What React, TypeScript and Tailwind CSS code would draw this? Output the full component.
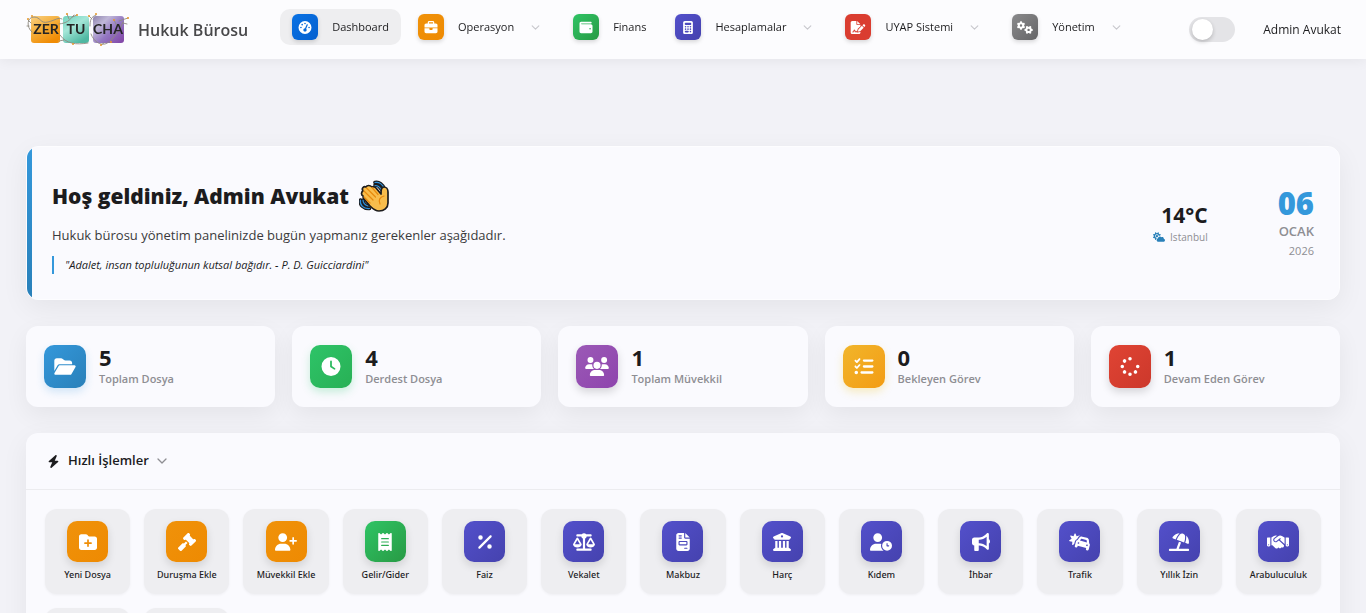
import React from "react";
import type { IconType } from "react-icons";
import {
  FaBolt,
  FaBriefcase,
  FaBuildingColumns,
  FaBullhorn,
  FaCalculator,
  FaCarBurst,
  FaClock,
  FaCloudSun,
  FaFileInvoice,
  FaFileSignature,
  FaFolderOpen,
  FaFolderPlus,
  FaGaugeHigh,
  FaGavel,
  FaGears,
  FaHandshake,
  FaListCheck,
  FaPercent,
  FaReceipt,
  FaScaleBalanced,
  FaSpinner,
  FaUmbrellaBeach,
  FaUserClock,
  FaUserPlus,
  FaUsers,
  FaWallet,
} from "react-icons/fa6";

const ORANGE = "bg-linear-to-br from-[#f0920a] to-[#ee8a02]";
const GREEN = "bg-linear-to-br from-[#2fc465] to-[#289a44]";
const INDIGO = "bg-linear-to-br from-[#5350cb] to-[#4542ae]";

type NavItem = { label: string; icon: IconType; color: string; active?: boolean; menu?: boolean };

const navItems: NavItem[] = [
  { label: "Dashboard", icon: FaGaugeHigh, color: "bg-linear-to-br from-[#0a72e4] to-[#0560cf]", active: true },
  { label: "Operasyon", icon: FaBriefcase, color: ORANGE, menu: true },
  { label: "Finans", icon: FaWallet, color: GREEN },
  { label: "Hesaplamalar", icon: FaCalculator, color: INDIGO, menu: true },
  { label: "UYAP Sistemi", icon: FaFileSignature, color: "bg-[#da3d30]", menu: true },
  { label: "Yönetim", icon: FaGears, color: "bg-linear-to-br from-[#8a8a8c] to-[#656567]", menu: true },
];

const stats = [
  { value: 5, label: "Toplam Dosya", icon: FaFolderOpen, color: "bg-linear-to-br from-[#3498db] to-[#2980b9] shadow-[0_4px_8px_rgba(52,152,219,0.2)]" },
  { value: 4, label: "Derdest Dosya", icon: FaClock, color: "bg-linear-to-br from-[#2ec468] to-[#28b055] shadow-[0_4px_8px_rgba(46,204,113,0.25)]" },
  { value: 1, label: "Toplam Müvekkil", icon: FaUsers, color: "bg-linear-to-br from-[#9b59b6] to-[#8e44ad] shadow-[0_4px_8px_rgba(0,0,0,0.15)]" },
  { value: 0, label: "Bekleyen Görev", icon: FaListCheck, color: "bg-linear-to-br from-[#f1b52a] to-[#f39c12] shadow-[0_4px_8px_rgba(241,196,15,0.25)]" },
  { value: 1, label: "Devam Eden Görev", icon: FaSpinner, color: "bg-linear-to-br from-[#e04434] to-[#cc382b] shadow-[0_4px_8px_rgba(0,0,0,0.15)]" },
];

const actions = [
  { label: "Yeni Dosya", icon: FaFolderPlus, color: ORANGE },
  { label: "Duruşma Ekle", icon: FaGavel, color: ORANGE },
  { label: "Müvekkil Ekle", icon: FaUserPlus, color: ORANGE },
  { label: "Gelir/Gider", icon: FaReceipt, color: GREEN },
  { label: "Faiz", icon: FaPercent, color: INDIGO },
  { label: "Vekalet", icon: FaScaleBalanced, color: INDIGO },
  { label: "Makbuz", icon: FaFileInvoice, color: INDIGO },
  { label: "Harç", icon: FaBuildingColumns, color: INDIGO },
  { label: "Kıdem", icon: FaUserClock, color: INDIGO },
  { label: "İhbar", icon: FaBullhorn, color: INDIGO },
  { label: "Trafik", icon: FaCarBurst, color: INDIGO },
  { label: "Yıllık İzin", icon: FaUmbrellaBeach, color: INDIGO },
  { label: "Arabuluculuk", icon: FaHandshake, color: INDIGO },
];

// icon-only tiles that follow the labelled ones
const extraActions = [
  { label: "Hesaplamalar", icon: FaCalculator, color: INDIGO },
  { label: "Yönetim", icon: FaGears, color: INDIGO },
];

const Chevron = ({ className }: { className: string }) => (
  <svg viewBox="0 0 10 6" className={className} fill="none" stroke="currentColor" strokeWidth="1.3" strokeLinecap="round" strokeLinejoin="round">
    <path d="M1 1l4 4 4-4" />
  </svg>
);

const Logo = () => (
  <svg viewBox="0 0 104 36" className="h-9 w-[104px] shrink-0" role="img" aria-label="Zertucha">
    <defs>
      <linearGradient id="lgZer" x1="0" y1="0" x2="0.6" y2="1">
        <stop offset="0" stopColor="#f9d183" />
        <stop offset="0.5" stopColor="#f5ae3a" />
        <stop offset="1" stopColor="#f08c05" />
      </linearGradient>
      <linearGradient id="lgTu" x1="0" y1="0" x2="0.6" y2="1">
        <stop offset="0" stopColor="#6fd3bd" />
        <stop offset="0.45" stopColor="#a5e6d8" />
        <stop offset="1" stopColor="#4fb8a2" />
      </linearGradient>
      <linearGradient id="lgCha" x1="0" y1="0" x2="1" y2="0.9">
        <stop offset="0" stopColor="#8d83ac" />
        <stop offset="0.3" stopColor="#c0b8d8" />
        <stop offset="0.6" stopColor="#9377c2" />
        <stop offset="1" stopColor="#8348a8" />
      </linearGradient>
    </defs>
    <rect x="5" y="4" width="29" height="27" rx="3" fill="url(#lgZer)" />
    <rect x="37" y="4" width="26" height="27" rx="3" fill="url(#lgTu)" />
    <rect x="67" y="4" width="31" height="27" rx="3" fill="url(#lgCha)" />
    <g fill="none" stroke="#8f8a80" strokeWidth="0.9" strokeLinecap="round">
      <path d="M6 20C0 15 1 5 8 5s6 7 14 5 10-5 14-3M2 8l3 3M3 14H1" />
      <path d="M33 12c8-1 10-3 15-9M43 7l-2-5M46 5l5-2M34 23c6 9 16 10 28 8M38 28l-5 1" />
      <path d="M64 14c0-6 1-9 6-11M66 7l-3-3M65 22c3 8 9 11 14 10s14-12 18-22M93 9l9-3M91 14l-3-6M97 11l4 1M78 31l-3 2" />
    </g>
    <g fill="#e79a2b">
      <circle cx="2" cy="7" r="1" />
      <circle cx="6" cy="4" r="1" />
      <circle cx="41" cy="2" r="1" />
      <circle cx="51" cy="3" r="1" />
      <circle cx="63" cy="4" r="1" />
      <circle cx="70" cy="2" r="1" />
      <circle cx="88" cy="8" r="1" />
      <circle cx="102" cy="6" r="1" />
      <circle cx="33" cy="29" r="1" />
      <circle cx="47" cy="32" r="1" />
      <circle cx="75" cy="33" r="1" />
      <circle cx="85" cy="30" r="1" />
    </g>
    <g className="font-[Lato,sans-serif] font-bold" fontSize="14" fill="#252525" textAnchor="middle">
      <text x="20" y="22">ZER</text>
      <text x="50" y="22">TU</text>
      <text x="82" y="22">CHA</text>
    </g>
  </svg>
);

const WavingHand = () => (
  <svg viewBox="0 0 30 32" className="h-8 w-[30px]" role="img" aria-label="El sallama">
    <g fill="none" strokeLinecap="round">
      <path d="M16 2.5c4-1 8 2 9 6M16 5c3 0 5 2 6 4M1.500 20c-1 5 3 9 9 8.500M4 20c0 3 2 5 5 6" stroke="#1c1c1e" strokeWidth="3.600" />
      <path d="M16 2.5c4-1 8 2 9 6M16 5.500c3 0 5 2 6 4M1.500 20c-1 5 3 9 9 8.500M4 20c0 3 2 5 5 6" stroke="#3092dd" strokeWidth="1.200" />
    </g>
    <path
      d="M4 16c-2-1-2-4 0-5-2-3 1-5 3-4 1-2 4-2 6 0 2-1 3 0 4 1l5 6c0-3 0-7 3-7 2 0 4 2 4 5v11c0 5-4 8-9 8-4 0-6-2-9-5l-6-7c-1-1-1-2-1-3z"
      fill="#f8bd4c"
      stroke="#1c1c1e"
      strokeWidth="1.700"
      strokeLinejoin="round"
    />
    <path d="M5 11l9 9M7.500 8l9 9M13 7.500l6 7M5 17l6 6M25 16c-4 1-6 4-4 8" fill="none" stroke="#e8890c" strokeWidth="1.200" strokeLinecap="round" />
  </svg>
);

const Navbar = () => (
  <header className="fixed inset-x-0 top-0 z-10 flex h-[59px] items-center bg-[#fcfcfe] pr-[25px] pl-[26px] shadow-[0_2px_12px_rgba(0,0,0,0.06)]">
    <a href="#" className="flex items-center gap-2 text-base font-semibold whitespace-nowrap text-[#48484a]">
      <Logo />
      Hukuk Bürosu
    </a>
    <nav className="ml-8 flex gap-[5px] pb-[5px]">
      {navItems.map((item) => (
        <button
          key={item.label}
          type="button"
          className={`flex h-9 items-center rounded-[10px] px-3 text-[11px] font-medium whitespace-nowrap text-[#1c1c1e] ${item.active ? "bg-[#eeeef0]" : ""}`}
        >
          <span className={`mr-[14px] flex size-[26px] items-center justify-center rounded-md text-white shadow-[0_2px_4px_rgba(0,0,0,0.15)] ${item.color}`}>
            <item.icon className="h-[13px] w-4" />
          </span>
          {item.label}
          {item.menu && <Chevron className="mr-1 ml-[17px] h-[5px] w-[9px] text-[#c7c7cc]" />}
        </button>
      ))}
    </nav>
    <label className="relative ml-auto h-[25px] w-[46px] shrink-0">
      <input type="checkbox" role="switch" aria-label="Koyu tema" className="peer size-full appearance-none rounded-full bg-[#e4e4e7]" />
      <span className="absolute top-[2px] left-[3px] size-[21px] rounded-full bg-white shadow-[0_2px_4px_rgba(0,0,0,0.2)] peer-checked:left-[22px]" />
    </label>
    <a href="#" className="ml-7 text-xs whitespace-nowrap text-[#1c1c1e]">
      Admin Avukat
    </a>
  </header>
);

const Welcome = () => (
  <section className="flex overflow-hidden rounded-xl border border-[#fdfdff] bg-[#fafafe] shadow-[0_8px_28px_rgba(0,0,0,0.06)]">
    <div className="w-[5px] shrink-0 bg-linear-to-b from-[#3498db] to-[#2980b9]" />
    <div className="flex flex-1 items-center justify-between pt-6 pr-[25px] pb-[25px] pl-5">
      <div>
        <h1 className="flex items-center gap-[10px] text-[21px] leading-[50px] font-extrabold text-[#1c1c1e]">
          Hoş geldiniz, Admin Avukat
          <WavingHand />
        </h1>
        <p className="text-[13px] leading-7 font-medium text-[#3a3a3c]">Hukuk bürosu yönetim panelinizde bugün yapmanız gerekenler aşağıdadır.</p>
        <blockquote className="mt-[7px] border-l-2 border-[#3498db] pl-[11px] text-[11px] leading-[18px] text-[#1c1c1e] italic">
          "Adalet, insan topluluğunun kutsal bağıdır. - P. D. Guicciardini"
        </blockquote>
      </div>
      <div className="flex items-center gap-[70px] text-right">
        <div>
          <p className="text-[21px] leading-7 font-bold text-[#1c1c1e]">14°C</p>
          <p className="flex items-center justify-end gap-[5px] text-[10px] leading-4 text-[#8e8e93]">
            <FaCloudSun className="size-3 text-[#2980b9]" />
            Istanbul
          </p>
        </div>
        <div className="text-[#8e8e93]">
          <p className="text-[31px] leading-8 font-extrabold text-[#3498db]">06</p>
          <p className="text-[13px] leading-6 font-semibold">OCAK</p>
          <p className="text-[11px] leading-4">2026</p>
        </div>
      </div>
    </div>
  </section>
);

const QuickActions = () => (
  <section className="rounded-xl bg-[#fafafe] shadow-[0_8px_28px_rgba(0,0,0,0.06)]">
    <button type="button" className="flex h-[57px] w-full items-center border-b border-[#ececef] px-[21px] text-[13px] font-semibold text-[#1c1c1e]">
      <FaBolt className="mr-2 size-[13px]" />
      Hızlı İşlemler
      <Chevron className="ml-2 h-[6px] w-[10px] text-[#8e8e93]" />
    </button>
    <div className="grid grid-cols-[repeat(auto-fill,minmax(80px,1fr))] gap-[14px] p-[19px]">
      {actions.map((action) => (
        <button
          key={action.label}
          type="button"
          className="flex h-[85px] flex-col items-center gap-[6px] rounded-xl bg-[#eeeef1] pt-3 font-['Noto_Sans',sans-serif] text-[9px] leading-[14px] font-medium whitespace-nowrap text-[#1c1c1e] shadow-[0_1px_3px_rgba(0,0,0,0.05)]"
        >
          <span className={`flex size-[41px] items-center justify-center rounded-[10px] text-white shadow-[0_4px_8px_rgba(0,0,0,0.12)] ${action.color}`}>
            <action.icon className="h-[18px] w-[22px]" />
          </span>
          {action.label}
        </button>
      ))}
      {extraActions.map((action) => (
        <button key={action.label} type="button" aria-label={action.label} className="flex h-[85px] items-center justify-center rounded-xl bg-[#eeeef1] shadow-[0_1px_3px_rgba(0,0,0,0.05)]">
          <span className={`flex size-[41px] items-center justify-center rounded-[10px] text-white ${action.color}`}>
            <action.icon className="h-[18px] w-[22px]" />
          </span>
        </button>
      ))}
    </div>
  </section>
);

export default function App() {
  return (
    <div className="min-h-screen bg-[#f2f2f7] font-['Open_Sans','Noto_Sans',sans-serif]">
      <Navbar />
      <main className="flex flex-col gap-[26px] px-[26px] pt-[146px] pb-[26px]">
        <Welcome />
        <section className="grid grid-cols-5 gap-[17px]">
          {stats.map((stat) => (
            <div key={stat.label} className="flex h-[81px] items-center gap-[13px] rounded-xl bg-[#fafafe] px-[18px] shadow-[0_8px_24px_rgba(0,0,0,0.06)]">
              <span className={`flex h-[43px] w-[42px] shrink-0 items-center justify-center rounded-[10px] text-white ${stat.color}`}>
                <stat.icon className="h-[19px] w-6" />
              </span>
              <div>
                <p className="text-[22px] leading-6 font-bold text-[#1c1c1e]">{stat.value}</p>
                <p className="text-[11px] leading-5 font-semibold whitespace-nowrap text-[#8e8e93]">{stat.label}</p>
              </div>
            </div>
          ))}
        </section>
        <QuickActions />
      </main>
    </div>
  );
}
